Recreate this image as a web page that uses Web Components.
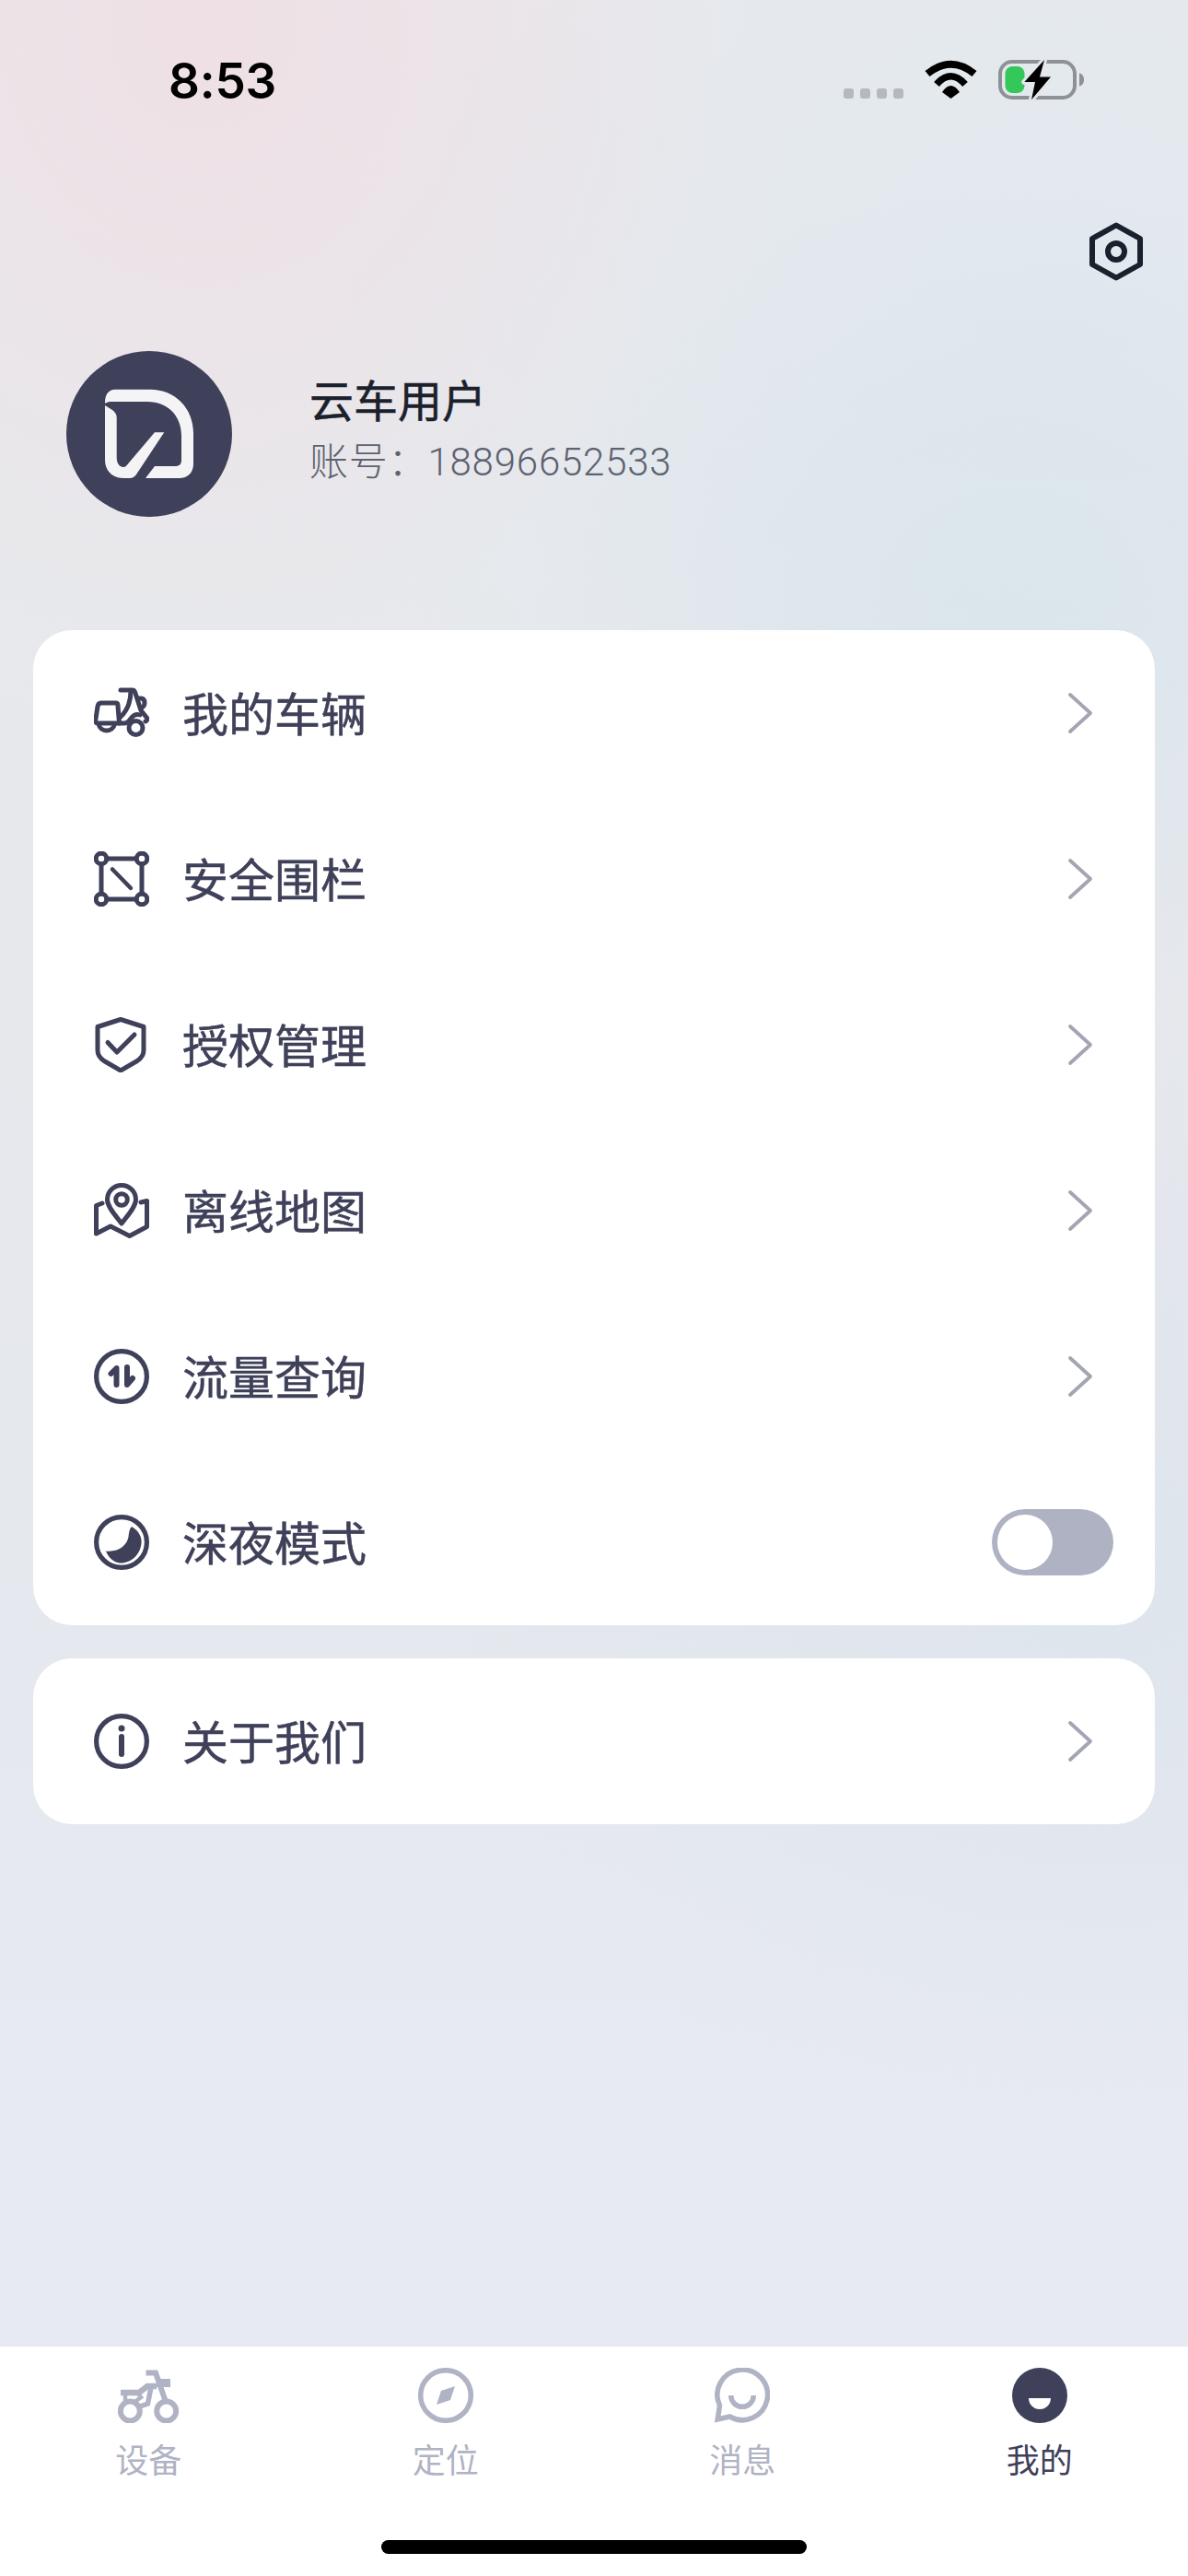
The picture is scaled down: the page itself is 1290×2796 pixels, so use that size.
<!DOCTYPE html>
<html lang="zh-CN">
<head>
<meta charset="utf-8">
<title>我的</title>
<style>
html,body{margin:0;padding:0;height:100%}
body{font-family:"Noto Sans CJK SC","Noto Sans",sans-serif;color:#3f4059}
</style>
</head>
<body>
<app-screen>
  <status-bar></status-bar>
  <profile-header name="云车用户" account="账号：18896652533"></profile-header>
  <menu-card>
    <menu-row label="我的车辆"><svg slot="icon" viewBox="0 0 60 60" width="60" height="60"><g fill="none" stroke="#3f4059" stroke-width="5" stroke-linecap="round" stroke-linejoin="round"><path d="M29 5H42C43.5 5 44 6 44.5 7L51 27L57 34.5C58.5 36.5 58 38 56 39"/><path d="M40 6C40 18 37 27 28 35"/><path d="M49 14h2c3 0 4 2 4 5s-2 5-4 5"/><path d="M8 19H24C25.5 19 26 20 26 22L27.500 41H4C2 41 1.500 39.500 1.700 38L4 23C4.300 20 6 19 8 19Z"/><path d="M5 42A9 9 0 0 0 22.500 42"/><path d="M27 41H33C36 41 38 39 40 36C43 32 47 31 50 32"/><circle cx="45.500" cy="46" r="7.500"/></g></svg></menu-row>
    <menu-row label="安全围栏"><svg slot="icon" viewBox="0 0 60 60" width="60" height="60"><g fill="none" stroke="#3f4059" stroke-width="5" stroke-linecap="round"><path d="M14 8H46M8 14V46M52 14V46M14 52H46"/><circle cx="8" cy="8" r="5.800"/><circle cx="52" cy="8" r="5.800"/><circle cx="8" cy="52" r="5.800"/><circle cx="52" cy="52" r="5.800"/><path d="M20 19.500L40 40" stroke-width="4.500"/></g></svg></menu-row>
    <menu-row label="授权管理"><svg slot="icon" viewBox="0 0 60 60" width="60" height="60"><g fill="none" stroke="#3f4059" stroke-width="5" stroke-linecap="round" stroke-linejoin="round"><path d="M29 2.500L54 10.500V36C54 41 51.500 44.500 47 47.500L29 58L11 47.500C6.500 44.500 4 41 4 36V10.500Z"/><path d="M15 27.500L25 38L44 19"/></g></svg></menu-row>
    <menu-row label="离线地图"><svg slot="icon" viewBox="0 0 60 60" width="60" height="60"><g fill="none" stroke="#3f4059" stroke-width="5" stroke-linecap="round" stroke-linejoin="round"><path d="M30 44C24 36 14.500 26 14.500 18A15.500 15.500 0 0 1 45.500 18C45.500 26 36 36 30 44Z"/><circle cx="30" cy="18" r="6.300"/><path d="M9 22L2.500 24.500V55L18 47L38.700 57.500L57.500 47.500V19.500L51 21"/></g></svg></menu-row>
    <menu-row label="流量查询"><svg slot="icon" viewBox="0 0 60 60" width="60" height="60"><g fill="none" stroke="#3f4059" stroke-linecap="round" stroke-linejoin="round"><circle cx="30" cy="30" r="27.400" stroke-width="5.200"/><path d="M24.500 39V21L18.500 27M36 20V39L42 32" stroke-width="6"/></g></svg></menu-row>
    <menu-row label="深夜模式"><svg slot="icon" viewBox="0 0 60 60" width="60" height="60"><circle cx="30" cy="30" r="27.400" fill="none" stroke="#3f4059" stroke-width="5.200"/><path fill="#3f4059" d="M41 13C48 17 52.500 24 51.500 31C50.500 43 41 52.500 29 52.500C22 52.500 16 47 13 39.500C27 41 36 33 37.500 24C38 19 38.500 15.500 41 13Z"/></svg><toggle-switch slot="trailing"></toggle-switch></menu-row>
  </menu-card>
  <menu-card>
    <menu-row label="关于我们"><svg slot="icon" viewBox="0 0 60 60" width="60" height="60"><circle cx="30" cy="30" r="27.400" fill="none" stroke="#3f4059" stroke-width="5.200"/><circle cx="30" cy="16" r="3.500" fill="#3f4059"/><path d="M30 25V44" stroke="#3f4059" stroke-width="6" stroke-linecap="round"/></svg></menu-row>
  </menu-card>
  <tab-bar>
    <tab-item label="设备"><svg slot="icon" viewBox="0 0 66 60" width="66" height="60"><g fill="none" stroke="currentColor"><circle cx="13.300" cy="47" r="10.500" stroke-width="6"/><circle cx="52.700" cy="47" r="10.500" stroke-width="6"/><path d="M3 27H23L32 20H42" stroke-width="6.500"/><path d="M30.500 5.500H41L52 37" stroke-width="6"/><path d="M36 21L32.500 39L24 42" stroke-width="5.500"/><path d="M22 28L25 32L17 38" stroke-width="4.500"/><path d="M8 29V36" stroke-width="4.500"/></g><rect x="42" y="12" width="15" height="9" fill="currentColor"/></svg></tab-item>
    <tab-item label="定位"><svg slot="icon" viewBox="0 0 60 60" width="60" height="60"><circle cx="30" cy="30" r="27.300" fill="none" stroke="currentColor" stroke-width="5.500"/><path fill="currentColor" d="M40 20L35 35L20 40L25 25Z"/></svg></tab-item>
    <tab-item label="消息"><svg slot="icon" viewBox="0 0 60 60" width="60" height="60"><g fill="none" stroke="currentColor" stroke-width="5.500"><path d="M5.500 41L3.200 56L16.500 53A27.300 27.300 0 1 0 5.500 41Z"/><path d="M17.700 30A12.300 12.300 0 0 0 42.300 30"/></g></svg></tab-item>
    <tab-item label="我的" active><svg slot="icon" viewBox="0 0 60 60" width="60" height="60"><circle cx="30" cy="30" r="30" fill="#3f4059"/><path fill="#fff" d="M18 33A12 12 0 0 0 42 33Z"/></svg></tab-item>
  </tab-bar>
</app-screen>
<script>
function def(name, css, html, init){
  customElements.define(name, class extends HTMLElement{
    constructor(){super();
      const r=this.attachShadow({mode:'open'});
      r.innerHTML='<style>'+css+'</style>'+(typeof html==='function'?html(this):html);
    }
    connectedCallback(){
      const r=this.shadowRoot;
      r.querySelectorAll('[data-attr]').forEach(n=>{n.textContent=this.getAttribute(n.dataset.attr)||''});
      if(init)init.call(this,r);
    }
  });
}
def('app-screen',`
:host{display:flex;flex-direction:column;height:2796px;width:1290px;overflow:hidden;
background:
radial-gradient(600px 680px at 220px 30px,rgba(240,222,228,.85),rgba(240,222,228,0) 100%),
radial-gradient(520px 460px at 1100px 660px,rgba(214,228,236,.7),rgba(214,228,236,0) 100%),
radial-gradient(900px 700px at 1150px 300px,rgba(224,232,240,.75),rgba(224,232,240,0) 100%),
radial-gradient(760px 620px at 1200px 1700px,rgba(218,227,236,.6),rgba(218,227,236,0) 100%),
linear-gradient(180deg,#e8eaec 0,#e6e8ec 1000px,#e5e8ee 1800px,#e7eaf3 2300px,#e7eaf3 100%)}
::slotted(menu-card){margin:0 36px 36px}
::slotted(tab-bar){margin-top:auto}
`,`<slot></slot>`);

def('status-bar',`
:host{display:flex;justify-content:space-between;align-items:flex-start;box-sizing:border-box;height:132px;padding:64px 113px 0 183px}
.t{font:600 53px/48px Inter,"Liberation Sans",sans-serif;color:#000;letter-spacing:-.2px}
.r{display:flex;align-items:flex-end;gap:23px;height:44px}
.d{display:flex;gap:7px;margin-bottom:1px}
.d i{display:block;width:11px;height:11px;border-radius:3px;background:#b5b9bf}
svg{display:block}
`,`<span class="t">8:53</span><div class="r"><div class="d"><i></i><i></i><i></i><i></i></div>
<svg width="57" height="42" viewBox="0 0 57 42" style="margin-bottom:1px"><g fill="none" stroke="#000"><path d="M3 15Q28.500 -5.500 54 15" stroke-width="8"/><path d="M13 26.500Q28.500 9 44 26.500" stroke-width="7.500"/></g><path d="M19 35Q28.500 21 38 35L28.500 42Z"/></svg>
<svg width="93" height="44" viewBox="0 0 93 44" style="overflow:visible"><rect x="2" y="3" width="81" height="39" rx="13" fill="none" stroke="#8e9196" stroke-width="4"/><path d="M88 15.500c3 .5 5 3 5 7s-2 6.500-5 7Z" fill="#8e9196"/><rect x="7.500" y="8" width="21" height="29" rx="8" fill="#34c759"/><path d="M50 1L28.300 25H40L36 44.300L57 19.500H45Z" fill="#000" stroke="#e4e8ed" stroke-width="6" stroke-linejoin="round" paint-order="stroke"/></svg></div>`);

def('profile-header',`
:host{display:block;height:552px;position:relative;box-sizing:border-box;padding:107px 49px 0 72px}
.top{position:absolute;right:48px;top:107px}
.row{display:flex;align-items:center;gap:84px;margin-top:142px}
.av{width:180px;height:180px;border-radius:50%;background:#3f4059;flex:none}
.av svg{display:block}
.txt{display:flex;flex-direction:column;gap:10px;padding-bottom:9px}
.n{font-size:48px;line-height:60px;color:#1a212c;font-weight:400;-webkit-text-stroke:.5px #1a212c}
.a{font-size:42px;line-height:60px;color:#5d6270;font-weight:300;font-family:Roboto,"Noto Sans CJK SC",sans-serif;letter-spacing:.8px}
`,`<svg class="top" width="60" height="68" viewBox="0 0 60 68" fill="none" stroke="#18212c" stroke-width="6" stroke-linejoin="round"><path d="M30 5.500L56 20V48L30 62.500L4 48V20Z"/><circle cx="30" cy="34" r="9"/></svg>
<div class="row"><div class="av"><svg width="180" height="180" viewBox="0 0 180 180" fill="#f4f4f6"><path d="M42 56C42 47 46 41.700 53 41.700H91C118 41.700 138 62 138 89V122C138 132 132 138 123 138H86L96 125H118C123 125 125 123 125 118V92C125 70 110 55 88 55H50C46 55 44 55.500 42 57Z"/><path d="M42 59L50 64C53 66 54.700 69 54.700 72V116C54.700 122 58 126 62 126C64 126 65 125 66.500 123L96 88.300H106.300L76 134C74 136.500 72 138 69 138H62C50 138 42 130 42 118Z"/></svg></div>
<div class="txt"><span class="n" data-attr="name"></span><span class="a" data-attr="account"></span></div></div>`);

def('menu-card',`:host{display:block;background:#fff;border-radius:42px;overflow:hidden}`,`<slot></slot>`);

def('menu-row',`
:host{display:flex;align-items:center;height:180px;box-sizing:border-box;padding:0 45px 0 66px}
::slotted(svg){display:block;flex:none}
.l{margin-left:36px;font-size:50px;line-height:60px;color:#3f4059;flex:1;font-weight:400;-webkit-text-stroke:.5px #3f4059;padding-bottom:5px}
.c{display:block;margin-right:22px}
slot[name=trailing]{display:block}
`,`<slot name="icon"></slot><span class="l" data-attr="label"></span><slot name="trailing"><svg class="c" width="28" height="46" viewBox="0 0 28 46" fill="none" stroke="#a3a5b3" stroke-width="3.800" stroke-linecap="round" stroke-linejoin="round"><path d="M3 3L25 23L3 43"/></svg></slot>`);

def('toggle-switch',`
:host{display:block;width:132px;height:72px;border-radius:36px;background:#afb2c3;padding:6px;box-sizing:border-box}
i{display:block;width:60px;height:60px;border-radius:50%;background:#fff}
`,`<i></i>`);

def('tab-bar',`
:host{display:block;height:249px;background:#fff;box-sizing:border-box;padding-top:23px}
.g{display:grid;grid-template-columns:repeat(4,1fr);height:187px}
.h{width:462px;height:15px;border-radius:8px;background:#000;margin:0 auto}
`,`<div class="g"><slot></slot></div><div class="h"></div>`);

def('tab-item',`
:host{display:flex;flex-direction:column;align-items:center;color:#b0b3c4}
:host([active]){color:#3f4059}
::slotted(svg){display:block}
.l{font-size:36px;line-height:50px;margin-top:13px}
`,`<slot name="icon"></slot><span class="l" data-attr="label"></span>`);
</script>
</body>
</html>
